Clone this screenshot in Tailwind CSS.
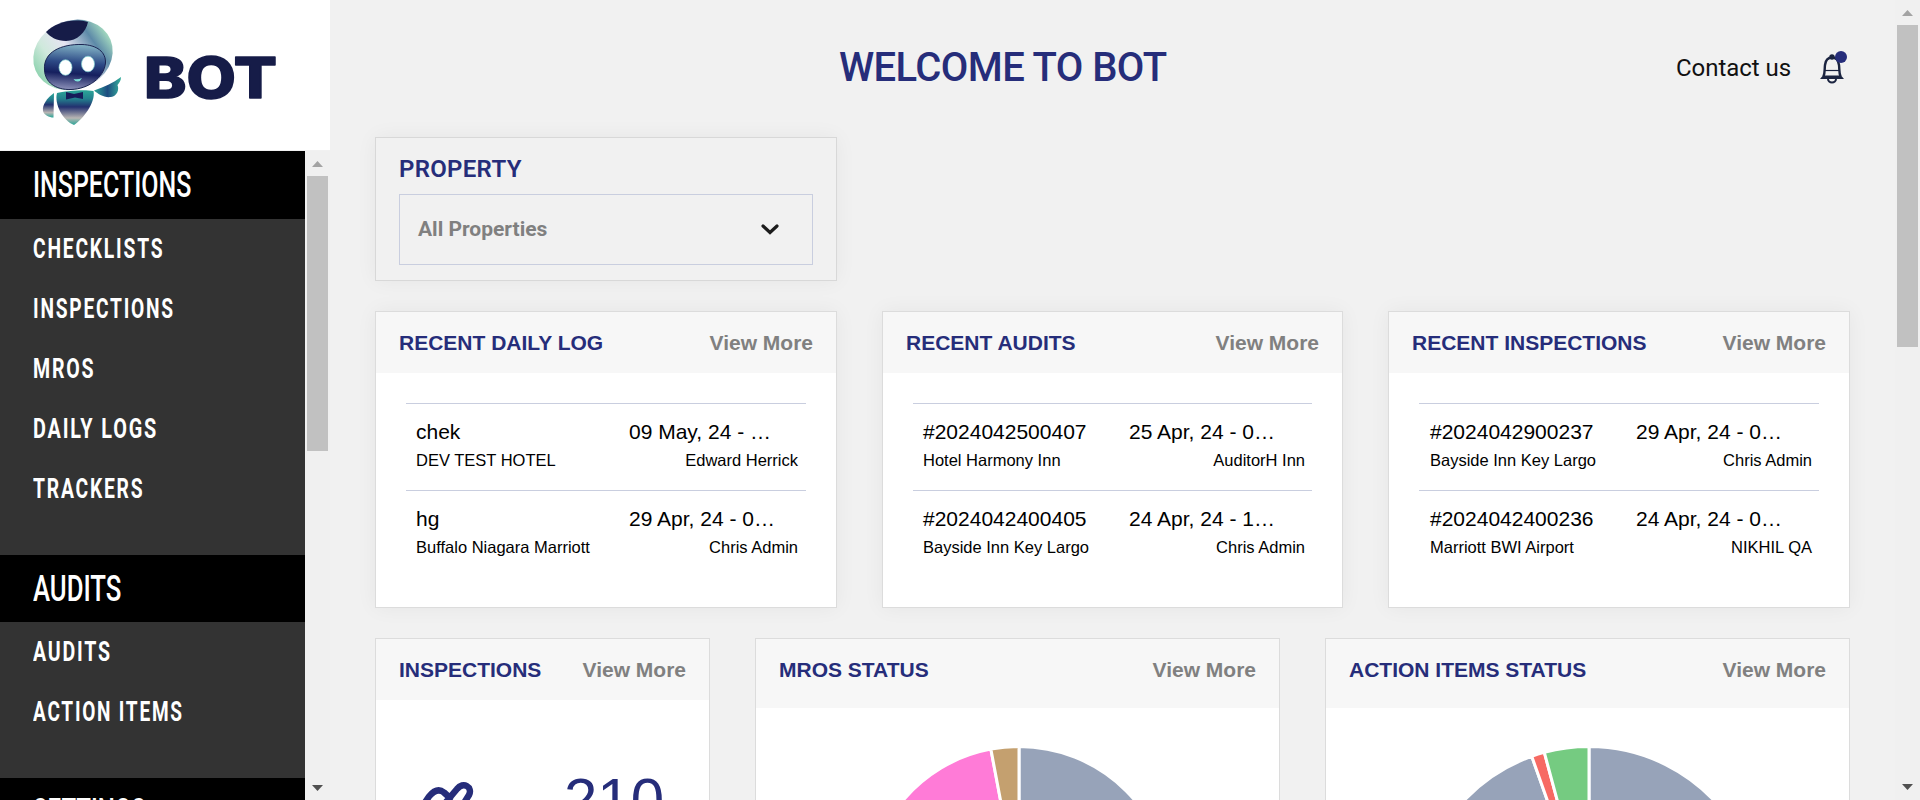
<!DOCTYPE html>
<html lang="en">
<head>
<meta charset="utf-8">
<title>BOT Dashboard</title>
<script src="https://cdn.jsdelivr.net/npm/@tailwindcss/browser@4"></script>
</head>
<body class="bg-[#f1f1f1] font-['Liberation_Sans',Arial,sans-serif] text-black">
<div class="flex h-[800px] w-[1920px] overflow-hidden">

  <!-- Sidebar -->
  <aside class="flex h-full w-[330px] shrink-0 flex-col">
    <div class="h-[150px] shrink-0 bg-white">
      <svg class="block" width="330" height="150" viewBox="0 0 330 150">
        <defs>
          <linearGradient id="head" x1="0" y1="0.6" x2="1" y2="0.4"><stop offset="0" stop-color="#8fd3b0"/><stop offset=".25" stop-color="#cfe9dc"/><stop offset=".5" stop-color="#e6e4f2"/><stop offset=".8" stop-color="#5d8aa8"/><stop offset="1" stop-color="#a5dcc0"/></linearGradient>
          <linearGradient id="face" x1=".55" y1="0" x2=".45" y2="1"><stop offset="0" stop-color="#84b4c6"/><stop offset=".4" stop-color="#2d4a86"/><stop offset=".65" stop-color="#151f5e"/><stop offset="1" stop-color="#8a8fb8"/></linearGradient>
          <linearGradient id="body" x1="0" y1="0" x2="0" y2="1"><stop offset="0" stop-color="#2ba597"/><stop offset=".25" stop-color="#23808e"/><stop offset=".48" stop-color="#23306f"/><stop offset=".8" stop-color="#b9b6b4"/><stop offset="1" stop-color="#2ba597"/></linearGradient>
          <linearGradient id="armr" x1="0" y1="0" x2="1" y2="0"><stop offset="0" stop-color="#2ba597"/><stop offset=".5" stop-color="#1d4c80"/><stop offset="1" stop-color="#35b09c"/></linearGradient>
        </defs>
        <ellipse cx="73" cy="55" rx="40.5" ry="34.5" transform="rotate(-22 73 55)" fill="url(#head)"/>
        <path d="M46 32C55 23 71 18 88 22C86 32 77 41 66 41C57 41 50 37 46 32Z" fill="#161c48"/>
        <path d="M44.500 70C43 52 61 44 82 44.500C97 45 106 52 105.500 63C104 78 88 89 71 89.500C55 90 45 82 44.500 70Z" fill="url(#face)" stroke="#1b2552" stroke-width="1"/>
        <ellipse cx="65.500" cy="67.500" rx="6.500" ry="7.800" fill="#fff" stroke="#7fd0d0" stroke-width=".7"/>
        <ellipse cx="88" cy="64" rx="6.500" ry="7.800" fill="#fff" stroke="#7fd0d0" stroke-width=".7"/>
        <path d="M73.500 79Q78 80 82 78Q80 82 77.500 81.500Q75 81.500 73.500 79Z" fill="#7fe0d8"/>
        <path d="M57 93C65 91 84 89 93.500 91C96 102 83 119 74 125C63 121 54 104 57 93Z" fill="url(#body)"/>
        <path d="M66 92L74 94L83 92V99L75 97.500L66 99.500Z" fill="#161c5a"/>
        <path d="M54 93C47 98 42 105 43 111C44 115 49 117.500 53.500 117.500Z" fill="url(#body)"/>
        <path d="M94 90.500C104 87 113 83 121 77C121 81 119 83 117.500 85C119.500 90 117 96 111 97C104 98 98 94 94 90.500Z" fill="url(#armr)"/>
        <text x="144" y="98" font-family="Inter, sans-serif" font-weight="800" font-size="56" fill="#161c48" stroke="#161c48" stroke-width="1.500" stroke-linejoin="round" textLength="133" lengthAdjust="spacingAndGlyphs">BOT</text>
      </svg>
    </div>
    <div class="flex min-h-0 flex-1 pt-px">
      <nav class="w-[305px] overflow-hidden bg-[#333333] font-['Roboto',sans-serif] text-white">
        <h2 class="flex h-[68px] items-center bg-black pl-[33px] text-[37px] font-medium"><span class="origin-left scale-x-[0.675]">INSPECTIONS</span></h2>
        <ul class="pb-9 pl-[33px] text-[27px] font-bold tracking-[2.5px]">
          <li class="flex h-[60px] items-center"><span class="origin-left scale-x-[0.714]">CHECKLISTS</span></li>
          <li class="flex h-[60px] items-center"><span class="origin-left scale-x-[0.71]">INSPECTIONS</span></li>
          <li class="flex h-[60px] items-center"><span class="origin-left scale-x-[0.725]">MROS</span></li>
          <li class="flex h-[60px] items-center"><span class="origin-left scale-x-[0.735]">DAILY LOGS</span></li>
          <li class="flex h-[60px] items-center"><span class="origin-left scale-x-[0.715]">TRACKERS</span></li>
        </ul>
        <h2 class="flex h-[67px] items-center bg-black pl-[33px] text-[37px] font-medium"><span class="origin-left scale-x-[0.695]">AUDITS</span></h2>
        <ul class="pb-9 pl-[33px] text-[27px] font-bold tracking-[2.5px]">
          <li class="flex h-[60px] items-center"><span class="origin-left scale-x-[0.725]">AUDITS</span></li>
          <li class="flex h-[60px] items-center"><span class="origin-left scale-x-[0.705]">ACTION ITEMS</span></li>
        </ul>
        <h2 class="flex h-[67px] items-center bg-black pl-[33px] text-[37px] font-medium"><span class="origin-left scale-x-[0.65]">SETTINGS</span></h2>
      </nav>
      <div class="flex w-[25px] flex-col items-center bg-[#f0f0f0] pt-2.5 pb-[9px]">
        <svg width="11" height="6" viewBox="0 0 11 6"><path d="M0 6L5.500 0L11 6Z" fill="#a3a3a3"/></svg>
        <div class="mt-[9px] h-[275px] w-[21px] bg-[#c1c1c1]"></div>
        <svg class="mt-auto" width="11" height="6" viewBox="0 0 11 6"><path d="M0 0L5.500 6L11 0Z" fill="#505050"/></svg>
      </div>
    </div>
  </aside>

  <!-- Dashboard -->
  <main class="flex min-w-0 flex-1 flex-col pr-[45px] pl-[45px]">
    <header class="flex h-[137px] shrink-0 items-center pb-[2px] font-['Roboto',sans-serif]">
      <h1 class="ml-[464px] w-[328px] text-[40px] font-medium tracking-[-0.6px] whitespace-nowrap text-[#262d7a]">WELCOME TO BOT</h1>
      <span class="ml-auto text-[24px] tracking-[-0.05px] text-[#111]">Contact us</span>
      <svg class="mr-[2px] ml-[28px]" width="29" height="34" viewBox="0 0 29 34" fill="none">
        <path d="M4.500 25.500C6 22 5.500 18 6 14C6.600 9 9 6.500 13 6.500S19.400 9 20 14C20.500 18 20 22 21.500 25.500" stroke="#1b2440" stroke-width="2.400"/>
        <path d="M5 19.500H21" stroke="#1b2440" stroke-width="1.200"/>
        <path d="M1 28L4 24.500H22L25 28Z" fill="#1b2440"/>
        <path d="M9 28A4 3.400 0 0 0 17 28" stroke="#1b2440" stroke-width="2"/>
        <circle cx="13" cy="6" r="2.700" fill="#1b2440"/>
        <circle cx="22" cy="6" r="6" fill="#262d7a"/>
      </svg>
    </header>

    <section class="h-[144px] w-[462px] shrink-0 border border-[#d8d8d8] px-[23px] pt-[13px] shadow-[0_0_20px_rgba(0,0,0,0.05)]">
      <h3 class="font-['Roboto',sans-serif] text-[24px] leading-9 font-semibold tracking-[0.3px] text-[#262d7a]">PROPERTY</h3>
      <div class="mt-[7px] flex h-[71px] w-[414px] items-center border border-[#c9cedf] pr-[33px] pl-[18px]">
        <span class="font-['Roboto',sans-serif] text-[21px] font-bold text-[#808080]">All Properties</span>
        <svg class="ml-auto" width="18" height="11" viewBox="0 0 18 11"><path d="M2 2L9 8.500L16 2" fill="none" stroke="#1c1c1c" stroke-width="3.200" stroke-linecap="round"/></svg>
      </div>
    </section>

    <div class="mt-[30px] grid shrink-0 grid-cols-[462px_461px_462px] gap-x-[45px] text-[21px]">
      <section class="h-[297px] border border-[#dcdcdc] bg-white shadow-[0_0_20px_rgba(0,0,0,0.05)]">
        <div class="flex h-[61px] items-center justify-between bg-[#f7f7f7] px-[23px] font-bold"><h3 class="text-[#262d7a]">RECENT DAILY LOG</h3><a class="text-[#808080]">View More</a></div>
        <div class="mt-[30px] ml-[30px] w-[400px]">
          <div class="h-[87px] border-t border-[#c9cedf] pt-[14px] pr-2 pl-2.5">
            <div class="flex h-7 items-center"><span class="w-[213px]">chek</span><span>09 May, 24 - …</span></div>
            <div class="flex h-7 items-center justify-between text-[16.5px]"><span>DEV TEST HOTEL</span><span>Edward Herrick</span></div>
          </div>
          <div class="h-[87px] border-t border-[#c9cedf] pt-[14px] pr-2 pl-2.5">
            <div class="flex h-7 items-center"><span class="w-[213px]">hg</span><span>29 Apr, 24 - 0…</span></div>
            <div class="flex h-7 items-center justify-between text-[16.5px]"><span>Buffalo Niagara Marriott</span><span>Chris Admin</span></div>
          </div>
        </div>
      </section>
      <section class="h-[297px] border border-[#dcdcdc] bg-white shadow-[0_0_20px_rgba(0,0,0,0.05)]">
        <div class="flex h-[61px] items-center justify-between bg-[#f7f7f7] px-[23px] font-bold"><h3 class="text-[#262d7a]">RECENT AUDITS</h3><a class="text-[#808080]">View More</a></div>
        <div class="mt-[30px] ml-[30px] w-[399px]">
          <div class="h-[87px] border-t border-[#c9cedf] pt-[14px] pr-[7px] pl-2.5">
            <div class="flex h-7 items-center"><span class="w-[206px]">#2024042500407</span><span>25 Apr, 24 - 0…</span></div>
            <div class="flex h-7 items-center justify-between text-[16.5px]"><span>Hotel Harmony Inn</span><span>AuditorH Inn</span></div>
          </div>
          <div class="h-[87px] border-t border-[#c9cedf] pt-[14px] pr-[7px] pl-2.5">
            <div class="flex h-7 items-center"><span class="w-[206px]">#2024042400405</span><span>24 Apr, 24 - 1…</span></div>
            <div class="flex h-7 items-center justify-between text-[16.5px]"><span>Bayside Inn Key Largo</span><span>Chris Admin</span></div>
          </div>
        </div>
      </section>
      <section class="h-[297px] border border-[#dcdcdc] bg-white shadow-[0_0_20px_rgba(0,0,0,0.05)]">
        <div class="flex h-[61px] items-center justify-between bg-[#f7f7f7] px-[23px] font-bold"><h3 class="text-[#262d7a]">RECENT INSPECTIONS</h3><a class="text-[#808080]">View More</a></div>
        <div class="mt-[30px] ml-[30px] w-[400px]">
          <div class="h-[87px] border-t border-[#c9cedf] pt-[14px] pr-[7px] pl-[11px]">
            <div class="flex h-7 items-center"><span class="w-[206px]">#2024042900237</span><span>29 Apr, 24 - 0…</span></div>
            <div class="flex h-7 items-center justify-between text-[16.5px]"><span>Bayside Inn Key Largo</span><span>Chris Admin</span></div>
          </div>
          <div class="h-[87px] border-t border-[#c9cedf] pt-[14px] pr-[7px] pl-[11px]">
            <div class="flex h-7 items-center"><span class="w-[206px]">#2024042400236</span><span>24 Apr, 24 - 0…</span></div>
            <div class="flex h-7 items-center justify-between text-[16.5px]"><span>Marriott BWI Airport</span><span>NIKHIL QA</span></div>
          </div>
        </div>
      </section>
    </div>

    <div class="mt-[30px] grid shrink-0 grid-cols-[335px_525px_525px] gap-x-[45px] text-[21px]">
      <section class="h-[420px] border border-[#dcdcdc] bg-white">
        <div class="flex h-[61px] items-center justify-between bg-[#f7f7f7] px-[23px] font-bold"><h3 class="text-[#262d7a]">INSPECTIONS</h3><a class="text-[#808080]">View More</a></div>
        <div class="flex items-start justify-between pt-[65px] pr-[45px] pl-[36px]">
          <svg class="mt-4" width="64" height="60" viewBox="0 0 64 60" fill="none" stroke="#262d7a" stroke-width="6.500" stroke-linecap="round" stroke-linejoin="round"><path d="M8 29L17 15.500Q25 6 32 11.500L38 17M34 21L45 8C51 0 61 6 57 14L42 38"/></svg>
          <span class="text-[60px] leading-[69px] text-[#262d7a]">210</span>
        </div>
      </section>
      <section class="h-[420px] border border-[#dcdcdc] bg-white">
        <div class="flex h-[69px] items-start justify-between bg-[#f7f7f7] px-[23px] pt-[15px] font-bold"><h3 class="text-[#262d7a]">MROS STATUS</h3><a class="text-[#808080]">View More</a></div>
        <!-- Slices start at twelve o'clock -->
        <svg class="mt-[38px] ml-[109px]" width="308" height="304" viewBox="-154 -152 308 304" stroke="#fff" stroke-width="3">
          <path d="M0 0V-151.500A151.500 151.500 0 0 1 0 151.500Z" fill="#97a3b9"/>
          <path d="M0 0V151.500A151.500 151.500 0 0 1 -28.130 -148.870Z" fill="#ff7bd7"/>
          <path d="M0 0L-28.130 -148.870A151.500 151.500 0 0 1 0 -151.500Z" fill="#c4a06f"/>
        </svg>
      </section>
      <section class="h-[420px] border border-[#dcdcdc] bg-white">
        <div class="flex h-[69px] items-start justify-between bg-[#f7f7f7] px-[23px] pt-[15px] font-bold"><h3 class="text-[#262d7a]">ACTION ITEMS STATUS</h3><a class="text-[#808080]">View More</a></div>
        <svg class="mt-[38px] ml-[88px]" width="350" height="344" viewBox="-175 -172 350 344" stroke="#fff" stroke-width="3">
          <path d="M0 0V-171.500A171.500 171.500 0 1 1 -57.250 -161.660Z" fill="#97a3b9"/>
          <path d="M0 0L-57.250 -161.660A171.500 171.500 0 0 1 -44.680 -165.580Z" fill="#f76a63"/>
          <path d="M0 0L-44.680 -165.580A171.500 171.500 0 0 1 0 -171.500Z" fill="#75cb81"/>
        </svg>
      </section>
    </div>
  </main>

  <!-- Page scrollbar -->
  <div class="flex h-full w-[25px] shrink-0 flex-col items-center bg-[#f0f0f0] pt-2.5 pb-[10px]">
    <svg width="11" height="6" viewBox="0 0 11 6"><path d="M0 6L5.500 0L11 6Z" fill="#a3a3a3"/></svg>
    <div class="mt-[9px] h-[322px] w-[21px] bg-[#c1c1c1]"></div>
    <svg class="mt-auto" width="11" height="6" viewBox="0 0 11 6"><path d="M0 0L5.500 6L11 0Z" fill="#505050"/></svg>
  </div>
</div>
</body>
</html>
